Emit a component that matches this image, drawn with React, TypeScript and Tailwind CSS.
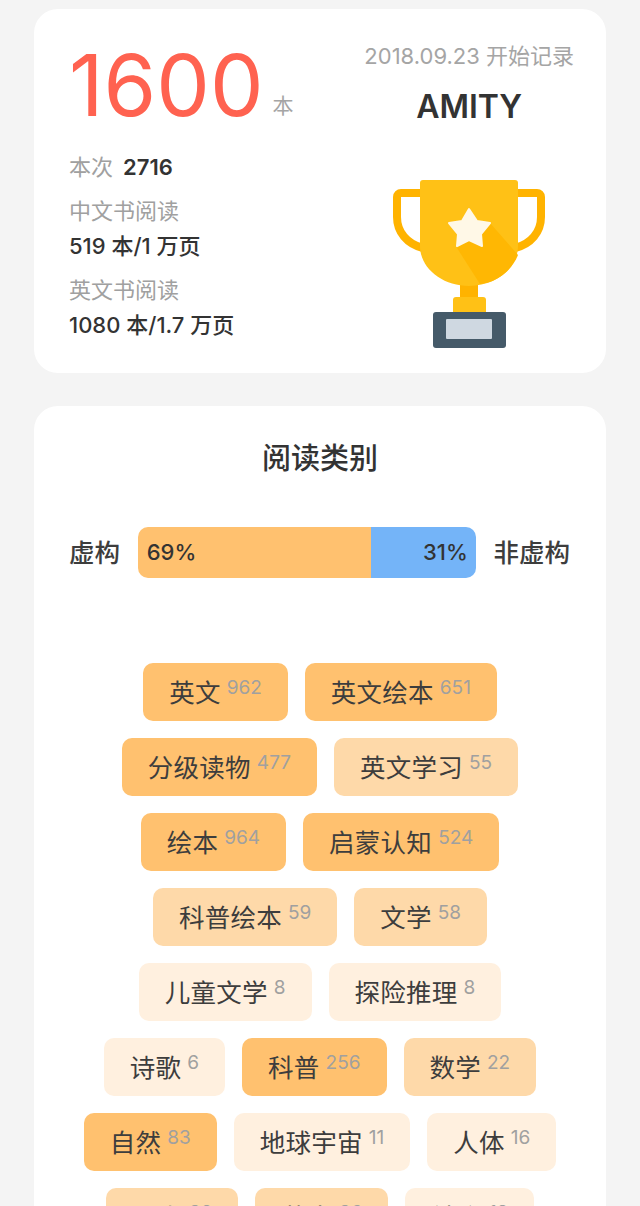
const FONT = "font-['Inter','Noto_Sans_CJK_SC',sans-serif]";

type Tag = { name: string; count: number; level: 0 | 1 | 2 };

const LEVEL_BG = ["bg-[#fff0df]", "bg-[#fed9a9]", "bg-[#ffc16f]"];

const TAG_ROWS: Tag[][] = [
  [
    { name: "英文", count: 962, level: 2 },
    { name: "英文绘本", count: 651, level: 2 },
  ],
  [
    { name: "分级读物", count: 477, level: 2 },
    { name: "英文学习", count: 55, level: 1 },
  ],
  [
    { name: "绘本", count: 964, level: 2 },
    { name: "启蒙认知", count: 524, level: 2 },
  ],
  [
    { name: "科普绘本", count: 59, level: 1 },
    { name: "文学", count: 58, level: 1 },
  ],
  [
    { name: "儿童文学", count: 8, level: 0 },
    { name: "探险推理", count: 8, level: 0 },
  ],
  [
    { name: "诗歌", count: 6, level: 0 },
    { name: "科普", count: 256, level: 2 },
    { name: "数学", count: 22, level: 1 },
  ],
  [
    { name: "自然", count: 83, level: 2 },
    { name: "地球宇宙", count: 11, level: 0 },
    { name: "人体", count: 16, level: 0 },
  ],
  [
    { name: "历史", count: 32, level: 1 },
    { name: "艺术", count: 36, level: 1 },
    { name: "社会", count: 19, level: 0 },
  ],
];

const Trophy = () => (
  <svg width="152" height="168" viewBox="0 0 152 168">
    {/* handles */}
    <path
      d="M30 13H8a4 4 0 0 0-4 4v20c0 15 10 27 26 31"
      fill="none"
      stroke="#ffb300"
      strokeWidth="8"
    />
    <path
      d="M122 13h22a4 4 0 0 1 4 4v20c0 15-10 27-26 31"
      fill="none"
      stroke="#ffb300"
      strokeWidth="8"
    />
    {/* stem and foot */}
    <rect x="67" y="104" width="18" height="14" fill="#ffb300" />
    <path d="M63 117h27a3 3 0 0 1 3 3v12H60v-12a3 3 0 0 1 3-3z" fill="#ffc116" />
    {/* cup */}
    <path
      d="M27 3a3 3 0 0 1 3-3h92a3 3 0 0 1 3 3v63c0 22-22 40-49 40S27 88 27 66z"
      fill="#ffc116"
    />
    <path d="M97 43l28 32c-6 15-20 27-38 29L64 68z" fill="#ffb703" />
    {/* star */}
    <path
      d="M76 29l8 12 13 2-9 11 1 12-13-6-12 6 1-12-9-11 13-2z"
      fill="#fff8e7"
      stroke="#fff8e7"
      strokeWidth="2"
      strokeLinejoin="round"
    />
    {/* plinth */}
    <rect x="40" y="132" width="73" height="36" rx="3" fill="#455a69" />
    <rect x="53" y="139" width="46" height="20" rx="1" fill="#cfd8e1" />
  </svg>
);

const TagChip = ({ tag }: { tag: Tag }) => (
  <div
    className={`flex h-[58px] items-center rounded-[10px] px-[26px] pt-[1px] ${LEVEL_BG[tag.level]}`}
  >
    <span className="text-[25.500px] leading-none tracking-[0.25px] text-[#3d3d3d]">{tag.name}</span>
    <span className="ml-[6px] -translate-y-[5px] text-[19px] leading-none text-[#a0a0a0]">
      {tag.count}
    </span>
  </div>
);

export default function App() {
  return (
    <div className={`h-[1206px] overflow-hidden bg-[#f4f4f4] px-[34px] pt-[9px] ${FONT}`}>
      <section className="flex h-[364px] justify-between rounded-[24px] bg-white pl-[35px] pr-[32px]">
        <div>
          <div className="mt-[34px] flex items-end">
            <span className="text-[85px] leading-[85px] text-[#ff6250]">1600</span>
            <span className="mb-[12px] ml-[9px] text-[21px] leading-none text-[#a5a5a5]">本</span>
          </div>
          <p className="mt-[24px] flex items-center text-[22px] leading-[30px] text-[#a0a0a0]">
            本次
            <span className="ml-[10px] font-semibold text-[#333]">2716</span>
          </p>
          <p className="mt-[14px] text-[22px] leading-[30px] text-[#a0a0a0]">中文书阅读</p>
          <p className="mt-[5px] text-[22px] leading-[30px] font-medium text-[#333]">519 本/1 万页</p>
          <p className="mt-[14px] text-[22px] leading-[30px] text-[#a0a0a0]">英文书阅读</p>
          <p className="mt-[5px] text-[22px] leading-[30px] font-medium text-[#333]">1080 本/1.7 万页</p>
        </div>
        <div className="flex flex-col items-center">
          <p className="mt-[32px] text-[22px] leading-[30px] text-[#a5a5a5]">2018.09.23 开始记录</p>
          <p className="mt-[16px] text-[32px] leading-[40px] font-semibold text-[#333]">AMITY</p>
          <div className="mt-[53px]">
            <Trophy />
          </div>
        </div>
      </section>

      <section className="mt-[33px] h-[900px] rounded-[24px] bg-white pt-[35px]">
        <h2 className="text-center text-[29px] leading-[36px] font-medium text-[#333]">阅读类别</h2>

        <div className="mt-[50px] flex items-center justify-between pl-[35px] pr-[36px]">
          <span className="text-[25.500px] leading-none font-medium text-[#3d3d3d]">虚构</span>
          <div className="flex h-[51px] w-[338px] overflow-hidden rounded-[10px] text-[22px] font-medium text-[#333]">
            <div className="flex w-[233px] items-center bg-[#ffc16f] pl-[9px]">69%</div>
            <div className="flex flex-1 items-center justify-end bg-[#74b4f8] pr-[8px]">31%</div>
          </div>
          <span className="text-[25.500px] leading-none font-medium text-[#3d3d3d]">非虚构</span>
        </div>

        <div className="mt-[85px] flex flex-col items-center gap-[17px]">
          {TAG_ROWS.map((row) => (
            <div key={row[0].name} className="flex justify-center gap-[17px]">
              {row.map((tag) => (
                <TagChip key={tag.name} tag={tag} />
              ))}
            </div>
          ))}
        </div>
      </section>
    </div>
  );
}
